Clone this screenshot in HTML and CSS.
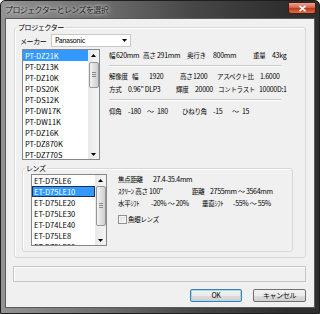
FILE: index.html
```html
<!DOCTYPE html>
<html lang="ja">
  <head>
    <meta charset="UTF-8" />
    <title>プロジェクターとレンズを選択</title>
    <link rel="stylesheet" href="styles.css">
  </head>
  <body>
    <div class="window">
      <div class="titlebar">
        <span class="title">プロジェクターとレンズを選択</span>
        <button class="close" type="button">
          <svg width="9" height="7" viewBox="0 0 9 7">
            <path d="M1.5 0.8 L7.5 6.2 M7.5 0.8 L1.5 6.2" stroke="#fff" stroke-width="1.7" />
          </svg>
        </button>
      </div>

      <div class="client">
        <fieldset class="group projector">
          <legend>プロジェクター</legend>

          <div class="maker-row">
            <span class="maker-label">メーカー</span>
            <div class="combo">
              <span>Panasonic</span>
              <svg width="5" height="3" viewBox="0 0 5 3"><path d="M0 0 H5 L2.5 3 Z" fill="#000" /></svg>
            </div>
          </div>

          <div class="projector-body">
            <div class="listbox projector-list">
              <ul class="items">
                <li class="selected">PT-DZ21K</li>
                <li>PT-DZ13K</li>
                <li>PT-DZ10K</li>
                <li>PT-DS20K</li>
                <li>PT-DS12K</li>
                <li>PT-DW17K</li>
                <li>PT-DW11K</li>
                <li>PT-DZ16K</li>
                <li>PT-DZ870K</li>
                <li>PT-DZ770S</li>
              </ul>
              <div class="scrollbar">
                <span class="sb-btn"><svg width="5" height="3" viewBox="0 0 5 3"><path d="M0 3 H5 L2.5 0 Z" fill="#000" /></svg></span>
                <span class="sb-thumb"></span>
                <span class="sb-space"></span>
                <span class="sb-btn"><svg width="5" height="3" viewBox="0 0 5 3"><path d="M0 0 H5 L2.5 3 Z" fill="#000" /></svg></span>
              </div>
            </div>

            <div class="specs">
              <div class="spec-row row-size">
                <span class="k">幅</span><span>620mm</span>
                <span class="k">高さ</span><span>291mm</span>
                <span class="k">奥行き</span><span>800mm</span>
                <span class="k">重量</span><span>43kg</span>
              </div>
              <hr class="etch">
              <div class="spec-row row-res">
                <span class="k">解像度</span><span class="k">幅</span><span>1920</span>
                <span class="k">高さ</span><span>1200</span>
                <span class="k">アスペクト比</span><span>1.6000</span>
              </div>
              <div class="spec-row row-type">
                <span class="k">方式</span><span>0.96" DLP3</span>
                <span class="k">輝度</span><span>20000</span>
                <span class="k">コントラスト</span><span>10000D:1</span>
              </div>
              <hr class="etch">
              <div class="spec-row row-angle">
                <span class="k">仰角</span><span>-180</span><span>～</span><span>180</span>
                <span class="k">ひねり角</span><span>-15</span><span>～</span><span>15</span>
              </div>
            </div>
          </div>

          <fieldset class="group lens">
            <legend>レンズ</legend>
            <div class="lens-body">
              <div class="listbox lens-list">
                <ul class="items">
                  <li>ET-D75LE6</li>
                  <li class="selected focused">ET-D75LE10</li>
                  <li>ET-D75LE20</li>
                  <li>ET-D75LE30</li>
                  <li>ET-D74LE40</li>
                  <li>ET-D75LE8</li>
                  <li>ET-D75LE50</li>
                </ul>
                <div class="scrollbar">
                  <span class="sb-btn"><svg width="5" height="3" viewBox="0 0 5 3"><path d="M0 3 H5 L2.5 0 Z" fill="#000" /></svg></span>
                  <span class="sb-thumb"></span>
                  <span class="sb-space"></span>
                  <span class="sb-btn"><svg width="5" height="3" viewBox="0 0 5 3"><path d="M0 0 H5 L2.5 3 Z" fill="#000" /></svg></span>
                </div>
              </div>

              <div class="lens-specs">
                <div class="spec-row row-focal">
                  <span class="k">焦点距離</span><span>27.4-35.4mm</span>
                </div>
                <div class="spec-row row-screen">
                  <span>ｽｸﾘｰﾝ <span class="k">高さ</span> 100"</span><span class="k">距離</span><span>2755mm ～ 3564mm</span>
                </div>
                <div class="spec-row row-shift">
                  <span class="k">水平ｼﾌﾄ</span><span>-20% ～ 20%</span>
                  <span class="k">垂直ｼﾌﾄ</span><span>-55% ～ 55%</span>
                </div>
                <label class="check-row">
                  <span class="checkbox"></span>
                  <span class="k">魚眼レンズ</span>
                </label>
              </div>
            </div>
          </fieldset>
        </fieldset>

        <div class="status"></div>

        <div class="buttons">
          <button class="btn default" type="button">OK</button>
          <button class="btn" type="button">キャンセル</button>
        </div>
      </div>
    </div>
  </body>
</html>
```

FILE: styles.css
```css
:root {
  --dialog-bg: #f0f0f0;
  --group-line: #d5d9dc;
  --list-border: #828790;
  --select-blue: #3399ff;
  --text: #000;
  --font: "Noto Sans CJK JP", "Noto Sans", sans-serif;
}

html,
body {
  margin: 0;
  padding: 0;
}

body {
  font-family: var(--font);
  font-size: 7px;
  letter-spacing: -0.4px;
  color: var(--text);
  background: #ffffff;
}

.window {
  box-sizing: border-box;
  width: 320px;
  height: 314px;
  padding: 0 4px 5px;
  border: 1px solid #1e1e1e;
  border-radius: 5px 5px 0 0;
  background: linear-gradient(to right, #939393 0%, #707070 30%, #474747 60%, #2e2e2e 90%);
  display: flex;
  flex-direction: column;
}

/* title bar */

.titlebar {
  height: 17px;
  display: flex;
  justify-content: space-between;
  align-items: flex-start;
}

.title {
  font-size: 8px;
  letter-spacing: -0.6px;
  line-height: 17px;
  color: #1a1a1a;
  text-shadow: 0 0 3px rgba(255, 255, 255, 0.9), 0 0 6px rgba(255, 255, 255, 0.6);
}

.close {
  width: 28px;
  height: 12px;
  margin: 1px -1px 0 0;
  padding: 0;
  border: 1px solid #4a1a10;
  border-radius: 0 0 3px 3px;
  background: linear-gradient(#e9a696 0%, #d4654c 45%, #c0391d 55%, #d9704d 100%);
  display: flex;
  align-items: center;
  justify-content: center;
}

/* client area */

.client {
  box-sizing: border-box;
  height: 290px;
  border: 1px solid #5a5a5a;
  background: var(--dialog-bg);
  display: flex;
  flex-direction: column;
}

.group {
  margin: 0;
  min-width: 0;
  border: 1px solid var(--group-line);
  border-radius: 3px;
  box-shadow: inset 1px 1px 0 #fff;
}

.group legend {
  padding: 0 1px;
  line-height: 10px;
  font-size: 7px;
}

.projector {
  box-sizing: border-box;
  width: 292px;
  margin: 3px 8px 0;
  padding: 2px 12px 5px 7px;
}

.projector legend {
  margin-left: -5px;
}

/* maker combo */

.maker-row {
  display: flex;
  align-items: center;
  height: 13px;
}

.maker-label {
  width: 31px;
  margin-left: -2px;
}

.combo {
  box-sizing: border-box;
  width: 80px;
  height: 13px;
  padding: 0 3px 0 3px;
  border: 1px solid #c8c8c8;
  background: #fff;
  display: flex;
  align-items: center;
  justify-content: space-between;
  line-height: 11px;
}

/* list boxes */

.projector-body {
  display: flex;
  margin-top: 2px;
}

.listbox {
  box-sizing: border-box;
  border: 1px solid var(--list-border);
  background: #fff;
  display: flex;
  overflow: hidden;
}

.projector-list {
  width: 78px;
  height: 111px;
}

.items {
  list-style: none;
  margin: 0;
  padding: 0;
  flex: 1;
  min-width: 0;
}

.items li {
  height: 11px;
  line-height: 11px;
  padding-left: 2px;
  font-size: 7.5px;
  letter-spacing: 0;
  white-space: nowrap;
}

.items li.selected {
  background: var(--select-blue);
  color: #fff;
}

.items li.focused {
  box-shadow: inset 0 0 0 1px #1c2f55;
}

.scrollbar {
  width: 11px;
  background: linear-gradient(to right, #e8e8e8, #f4f4f4);
  display: flex;
  flex-direction: column;
}

.sb-btn {
  height: 10px;
  display: flex;
  align-items: center;
  justify-content: center;
}

.sb-thumb {
  position: relative;
  box-sizing: border-box;
  margin: 2px 0 0 1px;
  width: 10px;
  border: 1px solid #979797;
  border-radius: 2px;
  background: linear-gradient(to right, #f2f2f2, #dcdcdc 60%, #cfcfcf);
}

.sb-thumb::after {
  content: "";
  position: absolute;
  left: 2px;
  top: 50%;
  width: 4px;
  height: 5px;
  margin-top: -3px;
  background: repeating-linear-gradient(#8a8a8a 0 1px, transparent 1px 2px);
}

.projector-list .sb-thumb {
  height: 26px;
}

.sb-space {
  flex: 1;
}

/* spec text */

.specs {
  margin-left: 9px;
  width: 180px;
}

.spec-row {
  display: grid;
  height: 13px;
  line-height: 13px;
  letter-spacing: -0.3px;
  white-space: nowrap;
}

.spec-row .k,
.check-row .k {
  font-size: 6.5px;
  letter-spacing: -0.3px;
}

.row-size {
  grid-template-columns: 7px 27px 14px 30px 26px 40px 19px auto;
}

.row-res {
  margin-top: 3px;
  grid-template-columns: 23px 17px 31px 13px 24px 43px auto;
}

.row-type {
  grid-template-columns: 19px 48px 19px 23px 41px auto;
}

.row-angle {
  margin-top: 4px;
  grid-template-columns: 19px 19px 10px 25px 31px 19px 10px auto;
}

.etch {
  width: 172px;
  height: 0;
  margin: 3px 0 0;
  border: 0;
  border-top: 1px solid #c9c9c9;
  border-bottom: 1px solid #fff;
}

/* lens group */

.lens {
  box-sizing: border-box;
  width: 271px;
  margin-top: 3px;
  padding: 1px 8px 5px 8px;
}

.lens legend {
  margin-left: -6px;
}

.lens-body {
  display: flex;
}

.lens-list {
  width: 76px;
  height: 72px;
}

.lens-list .sb-thumb {
  height: 40px;
  margin-top: 1px;
}

.lens-specs {
  margin: -1px 0 0 11px;
}

.lens-specs .spec-row {
  height: 12px;
  line-height: 12px;
}

.row-focal {
  grid-template-columns: 35px auto;
}

.row-screen {
  grid-template-columns: 74px 18px auto;
}

.row-shift {
  grid-template-columns: 33px 51px 31px auto;
}

.check-row {
  margin-top: 4px;
  height: 12px;
  display: flex;
  align-items: center;
}

.checkbox {
  box-sizing: border-box;
  width: 9px;
  height: 9px;
  margin-right: 1px;
  border: 1px solid #8e8f8f;
  background: linear-gradient(135deg, #dcdcdc, #fafafa);
  box-shadow: inset 0 0 0 1px #f4f4f4;
}

/* bottom */

.status {
  height: 16px;
  box-sizing: border-box;
  margin: 8px 8px 0 7px;
  border: 1px solid #c6c6c6;
  box-shadow: inset 1px 1px 0 #fff;
}

.buttons {
  display: flex;
  justify-content: flex-end;
  gap: 11px;
  margin: 7px 8px 0 0;
}

.btn {
  box-sizing: border-box;
  width: 53px;
  height: 13px;
  padding: 0;
  font-family: var(--font);
  font-size: 7px;
  letter-spacing: -0.4px;
  line-height: 11px;
  color: #000;
  border: 1px solid #707070;
  border-radius: 2px;
  background: linear-gradient(#f2f2f2 0%, #ebebeb 50%, #dddddd 51%, #cfcfcf 100%);
}

.btn.default {
  width: 52px;
  border-color: #3c7fb1;
  box-shadow: inset 0 0 0 1px #a8d8f0;
}
```
